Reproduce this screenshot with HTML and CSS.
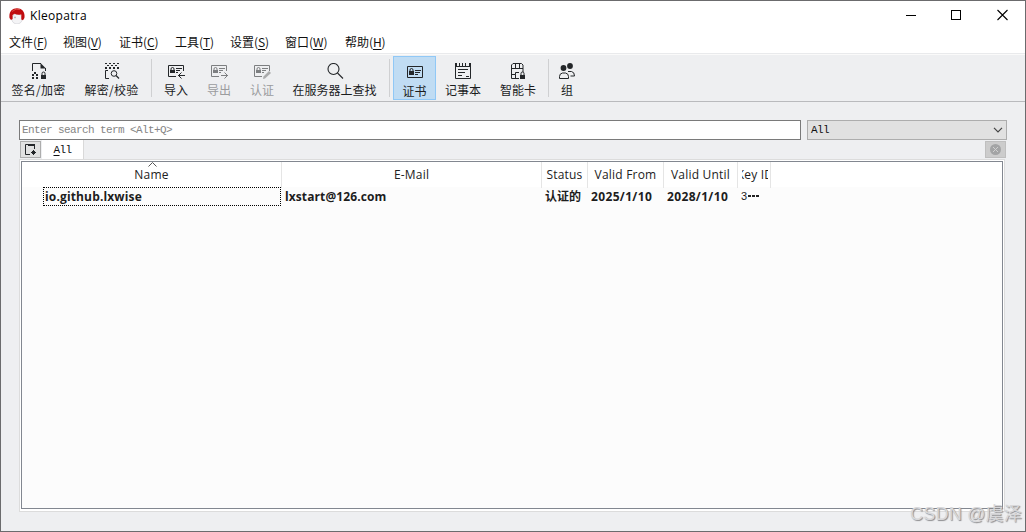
FILE: index.html
```html
<!DOCTYPE html>
<html lang="zh-CN">
<head>
<meta charset="utf-8">
<title>Kleopatra</title>
<link rel="stylesheet" href="styles.css">
</head>
<body>
<div class="window">
  <header class="titlebar">
    <svg class="logo" width="16" height="16" viewBox="0 0 16 16"><ellipse cx="8" cy="11" rx="5.2" ry="5" fill="#f4f4f6" stroke="#c9c9cf" stroke-width=".6"/><path d="M.5 10C-.3 4 3 .3 8 .3S16.3 4 15.4 10L14 12.2 12.3 11.4V6.5Q8 7.400 5.800 5.800L3.600 7V11L2 12Z" fill="#c00d10"/><path d="M3 3.500Q7-.2 11 1.600" fill="none" stroke="#e2574f" stroke-width=".8"/><path d="M6 8.700v1.500" stroke="#888"/></svg>
    <span class="title">Kleopatra</span>
    <svg class="controls" width="103" height="12" viewBox="0 0 103 12" fill="none" stroke="#000" shape-rendering="crispEdges"><path d="M0 6.500h10"/><rect x="45.500" y="1.500" width="9" height="9"/><path d="M91.500 1l10 10M101.500 1l-10 10" shape-rendering="auto" stroke-width="1.100"/></svg>
  </header>
  <nav class="menu">
    <span class="m1">文件(<u>F</u>)</span><span class="m2">视图(<u>V</u>)</span><span class="m3">证书(<u>C</u>)</span><span class="m4">工具(<u>T</u>)</span><span class="m5">设置(<u>S</u>)</span><span class="m6">窗口(<u>W</u>)</span><span class="m7">帮助(<u>H</u>)</span>
  </nav>
  <div class="toolbar">
    <div class="tool sign"><svg width="16" height="16" viewBox="0 0 16 16"><path d="M1.500 8V.5H10M14.500 5V8" fill="none" stroke="#232629"/><path d="M9.500 0L15 5.500H9.500Z" fill="#232629"/><path d="M3 9h2v2H3zM1 11h2v2H1zM5 11h2v2H5zM1 14h2v2H1zM5 14h2v2H5zM10 12h5v4h-5z" fill="#232629"/><path d="M11 12v-1.500a1.500 1.500 0 0 1 3 0V12" fill="none" stroke="#232629"/></svg><span>签名/加密</span></div>
    <div class="tool decrypt"><svg width="16" height="16" viewBox="0 0 16 16"><path d="M1 0h2v1H1zM5 0h2v1H5zM9 0h2v1H9zM13 0h2v1h-2zM3 2h2v1H3zM7 2h2v1H7zM11 2h2v1h-2zM1 4h2v2H1zM5 4h2v2H5zM9 4h2v2H9zM13 4h2v2h-2z" fill="#232629"/><path d="M5 15.500H1.500V7.500H4" fill="none" stroke="#232629"/><circle cx="10" cy="10.500" r="2.800" fill="none" stroke="#232629"/><path d="M12 12.500l3 3" stroke="#232629" stroke-width="1.200"/></svg><span>解密/校验</span></div>
    <i class="sep"></i>
    <div class="tool import"><svg width="18" height="16" viewBox="0 0 18 16"><path d="M9 13.500H1.500V2.500H16.500V8" fill="none" stroke="#232629"/><path d="M3 7h5v3H3z" fill="#232629"/><path d="M4 7V6a1.500 1.500 0 0 1 3 0v1M9 5.500h6M9 7.500h4M9 9.500h2M11 12.500h7M14.500 9.500l-3 3 3 3" fill="none" stroke="#232629"/></svg><span>导入</span></div>
    <div class="tool export off"><svg width="18" height="16" viewBox="0 0 18 16"><path d="M9 13.500H1.500V2.500H16.500V8" fill="none" stroke="#7d7f81"/><path d="M3 7h5v3H3z" fill="#7d7f81"/><path d="M4 7V6a1.500 1.500 0 0 1 3 0v1M9 5.500h6M9 7.500h4M9 9.500h2M11 12.500h7M14.500 9.500l3 3-3 3" fill="none" stroke="#7d7f81"/></svg><span>导出</span></div>
    <div class="tool certify off"><svg width="18" height="16" viewBox="0 0 18 16"><path d="M9 13.500H1.500V2.500H16.500V8" fill="none" stroke="#7d7f81"/><path d="M3 7h5v3H3z" fill="#7d7f81"/><path d="M4 7V6a1.500 1.500 0 0 1 3 0v1M9 5.500h6M9 7.500h4M9 9.500h2" fill="none" stroke="#7d7f81"/><path d="M16 8l2 2-6 5.500-2 .5.500-2.500z" fill="#aaabac"/></svg><span>认证</span></div>
    <div class="tool lookup"><svg width="18" height="16" viewBox="0 0 18 16" fill="none" stroke="#232629" stroke-width="1.100"><circle cx="7.500" cy="6" r="5.500"/><path d="M11.500 10l5.500 5.500"/></svg><span>在服务器上查找</span></div>
    <i class="sep sep-mid"></i>
    <div class="tool certs active"><svg width="18" height="16" viewBox="0 0 18 16"><path d="M1.500 2.500h15v11h-15z" fill="none" stroke="#232629"/><path d="M3 7h5v4H3z" fill="#232629"/><path d="M4 7V6a1.500 1.500 0 0 1 3 0v1M9 6.500h6M9 8.500h5M9 10.500h3" fill="none" stroke="#232629"/></svg><span>证书</span></div>
    <div class="tool notepad"><svg width="16" height="16" viewBox="0 0 16 16"><path d="M.5 1v14.500h15V1M0 3.500h16M3 6.500h10M3 9.500h7M3 12.500h4M11 13.500h3" fill="none" stroke="#232629"/><path d="M0 0h2v3H0zM4 0h1v3H4zM7 0h1v3H7zM10 0h1v3h-1zM14 0h2v3h-2z" fill="#232629"/></svg><span>记事本</span></div>
    <div class="tool card"><svg width="16" height="16" viewBox="0 0 16 16"><path d="M9 15.500H1.500V2L3 .5H11.500L13 2V9M2 5.500h11M5.500 1v4M9.500 1v4M2 11.500h3.500V15M5.500 11.500V9.500H9" fill="none" stroke="#232629"/><path d="M10 12h5v4h-5z" fill="#232629"/><path d="M11 12v-1.500a1.500 1.500 0 0 1 3 0V12" fill="none" stroke="#232629"/></svg><span>智能卡</span></div>
    <i class="sep sep-end"></i>
    <div class="tool group"><svg width="16" height="16" viewBox="0 0 16 16"><circle cx="4.500" cy="5" r="2.900" fill="#232629"/><circle cx="11" cy="3" r="2.900" fill="#232629"/><path d="M.5 15.500V13.500Q.5 10.500 3.500 10H6.500Q9.500 10.500 9.500 13.500V15.500ZM9 8.500h3.500q3 .5 3 4.500h-4" fill="none" stroke="#232629"/></svg><span>组</span></div>
  </div>
  <main class="content">
    <div class="search-row">
      <div class="search">Enter search term &lt;Alt+Q&gt;</div>
      <div class="filter"><span>All</span><svg width="10" height="6" viewBox="0 0 10 6"><path d="M1 .8l4 4 4-4" fill="none" stroke="#444" stroke-width="1.200"/></svg></div>
    </div>
    <div class="tabs">
      <div class="corner"><svg width="13" height="13" viewBox="0 0 13 13"><path d="M6 11.500H1.500V1.500H10.500V6" fill="none" stroke="#232629"/><path d="M4 1h7v2H4zM9 7h1v1h1v1h1v1h-1v1h-1v1H9v-1H8v-1H7V9h1V8h1z" fill="#232629"/></svg></div>
      <div class="tab"><span><u>A</u>ll</span></div>
      <div class="corner close"><svg width="11" height="11" viewBox="0 0 11 11"><circle cx="5.500" cy="5.500" r="5.500" fill="#a3a4a5"/><path d="M3 3l5 5M8 3l-5 5" stroke="#d0d0d0"/></svg></div>
    </div>
    <div class="pane">
      <div class="table">
        <div class="row head">
          <div class="cell"><svg class="sort" width="9" height="5" viewBox="0 0 9 5"><path d="M.5 4.500l4-4 4 4" fill="none" stroke="#555"/></svg><span>Name</span></div>
          <div class="cell"><span>E-Mail</span></div>
          <div class="cell"><span>Status</span></div>
          <div class="cell"><span>Valid From</span></div>
          <div class="cell"><span>Valid Until</span></div>
          <div class="cell"><span class="h-key"><span>Key ID</span></span></div>
        </div>
        <div class="row data">
          <div class="cell name">io.github.lxwise</div>
          <div class="cell">lxstart@126.com</div>
          <div class="cell status">认证的</div>
          <div class="cell date">2025/1/10</div>
          <div class="cell date">2028/1/10</div>
          <div class="cell key">3<svg width="12" height="2" viewBox="0 0 12 2"><path d="M0 0h3v2H0zM4 0h3v2H4zM8 0h3v2H8z" fill="#222"/></svg></div>
        </div>
      </div>
    </div>
  </main>
  <div class="watermark">CSDN @虞泽</div>
</div>
</body>
</html>
```
FILE: styles.css
```css
* { box-sizing: border-box; }
body { margin: 0; font: 12px/16px "Open Sans", "Noto Sans CJK SC", sans-serif; color: #111; }
svg { display: block; flex: none; }
u { text-decoration: underline; text-underline-offset: 2px; text-decoration-thickness: 1px; text-decoration-skip-ink: none; }
.window { position: relative; width: 1026px; height: 532px; border: 1px solid #6b6b6d; background: #eeeff1; display: flex; flex-direction: column; overflow: hidden; }
.titlebar { height: 29px; flex: none; background: #fff; display: flex; align-items: center; padding: 0 16px 0 8px; }
.title { margin-left: 5px; color: #000; letter-spacing: .3px; }
.controls { margin-left: auto; margin-top: -1px; }
.menu { height: 23px; flex: none; background: #fff; display: flex; align-items: center; padding: 1px 0 0 8px; font-family: "Noto Sans CJK SC", sans-serif; white-space: nowrap; }
.menu span { width: 55px; flex: none; letter-spacing: -.05px; }
.menu .m1 { width: 54px; }
.menu .m2, .menu .m3 { width: 56px; }
.menu .m6 { width: 60px; }
.toolbar { height: 49px; flex: none; display: flex; align-items: flex-start; padding: 2px 0 0 4px; border-top: 1px solid #e9eaec; border-bottom: 1px solid #b9babd; box-shadow: inset 0 1px #fafafa; }
.tool { height: 45px; padding-top: 7px; flex: none; display: flex; flex-direction: column; align-items: center; white-space: nowrap; font: 12px/16px "Noto Sans CJK SC", sans-serif; color: #1b1c1e; }
.tool span { margin-top: 3px; }
.tool.off { color: #9b9c9e; }
.sign { width: 68px; }
.sign span, .decrypt span { letter-spacing: .3px; margin-left: -1px; }
.decrypt { width: 78px; }
.import { width: 42px; margin-left: 3px; }
.export { width: 44px; }
.certify { width: 42px; }
.lookup { width: 102px; padding-left: 1px; }
.certs { width: 43px; margin-left: 3px; }
.notepad { width: 54px; }
.card { width: 56px; }
.group { width: 36px; }
.active { background: #c0dcf3; border: 1px solid #90c8f6; height: 44px; }
.sep { width: 1px; height: 38px; margin-top: 3px; background: #cfd0d2; flex: none; }
.sep-mid { margin-left: 4px; }
.sep-end { margin-left: 2px; }
.content { flex: 1; padding: 18px 18px 0; display: flex; flex-direction: column; }
.search-row { display: flex; height: 20px; gap: 6px; font: 11px/19px "Liberation Mono", monospace; letter-spacing: -.6px; }
.search { width: 782px; border: 1px solid #7a7a7a; background: #fff; color: #858585; padding-left: 2px; white-space: pre; }
.filter { width: 200px; border: 1px solid #adadad; background: #e1e1e1; display: flex; justify-content: space-between; align-items: center; padding: 0 3px; }
.tabs { display: flex; height: 19px; align-items: flex-start; padding-left: 1px; font: 11px/20px "Liberation Mono", monospace; letter-spacing: -.6px; }
.corner { width: 21px; height: 17px; margin-top: 1px; border: 1px solid #adadad; background: #e1e1e1; display: flex; align-items: center; justify-content: center; }
.tab { width: 42px; height: 19px; margin-left: 1px; border-right: 1px solid #d9d9d9; background: #fff; text-align: center; }
.close { margin-left: auto; background: #ccc; border-color: #bfbfbf; margin-right: 1px; }
.pane { width: 986px; height: 353px; border: 1px solid #dcdcdc; background: #fff; padding: 1px; }
.table { width: 982px; height: 348px; border: 1px solid #828790; background: #fcfcfc; }
.row { display: grid; grid-template-columns: 260px 260px 46px 76px 74px 33px 1fr; }
.head { height: 25px; background: #fff; line-height: 26px; color: #222; letter-spacing: .2px; }
.head .cell { position: relative; border-right: 1px solid #e5e5e5; text-align: center; white-space: nowrap; }
.sort { position: absolute; left: 126px; top: 0; }
.h-key { display: flex; width: 26px; margin-left: 4px; overflow: hidden; justify-content: center; }
.data { height: 20px; line-height: 19px; font-weight: 700; color: #1d1d1d; }
.data .cell { padding-left: 3px; white-space: nowrap; letter-spacing: .1px; }
.data .name { margin: 0 1px 0 21px; padding-left: 1px; border: 1px dotted #000; line-height: 17px; height: 19px; letter-spacing: .15px; }
.data .date { letter-spacing: .35px; }
.data .status { letter-spacing: 0; }
.data .key { display: flex; align-items: center; gap: 1px; font: 11px "Liberation Sans", sans-serif; padding-bottom: 2px; }
.watermark { position: absolute; right: 3px; bottom: 4px; font: 18px/26px "Liberation Sans", "Noto Sans CJK SC", sans-serif; letter-spacing: .2px; color: #d8d8da; text-shadow: 1px 1px 1px #8b8b8e; white-space: nowrap; }
```
